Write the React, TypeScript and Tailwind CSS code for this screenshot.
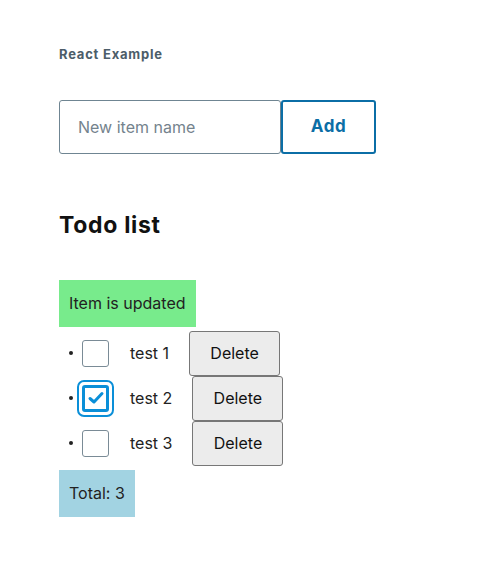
import { useState } from "react"

type Item = {
  id: number
  name: string
  done: boolean
}

const initialItems: Item[] = [
  { id: 1, name: "test 1", done: false },
  { id: 2, name: "test 2", done: true },
  { id: 3, name: "test 3", done: false },
]

const font = { fontFamily: "Inter, 'Noto Sans', sans-serif" }

const CheckBox = ({ checked, onChange }: { checked: boolean; onChange: () => void }) => {
  if (checked) {
    return (
      <button
        onClick={onChange}
        className="flex h-[37px] w-[37px] items-center justify-center rounded-[7px] border-2 border-[#0a8fd8]"
      >
        <span className="flex h-[27px] w-[27px] items-center justify-center rounded-[3px] border-[3px] border-[#0a8fd8] bg-white">
          <svg width="18" height="18" viewBox="0 0 18 18">
            <path
              d="M3 9.5 L7 13 L15 4.5"
              fill="none"
              stroke="#0a8fd8"
              strokeWidth="3"
              strokeLinecap="round"
              strokeLinejoin="round"
            />
          </svg>
        </span>
      </button>
    )
  }
  return (
    <span className="flex h-[37px] w-[37px] items-center justify-center">
      <button
        onClick={onChange}
        className="h-[27px] w-[27px] rounded-[3px] border border-[#7a8b96] bg-white"
      />
    </span>
  )
}

export default function App() {
  const [items, setItems] = useState<Item[]>(initialItems)
  const [name, setName] = useState("")

  const toggle = (id: number) =>
    setItems(items.map((i) => (i.id === id ? { ...i, done: !i.done } : i)))

  return (
    <div className="min-h-[569px] bg-white pl-[59px] text-[#1b1b1b]" style={font}>
      <div className="pt-[45px] text-[13px] font-bold tracking-[0.06em] text-[#4c5d69]">
        React Example
      </div>

      <div className="mt-[35px] flex">
        <input
          value={name}
          onChange={(e) => setName(e.target.value)}
          placeholder="New item name"
          className="h-[54px] w-[222px] rounded-[3px] border border-[#6f8592] px-[18px] text-[16px] text-[#333] outline-none placeholder:text-[#74838d]"
        />
        <button className="h-[54px] w-[95px] rounded-[3px] border-2 border-[#0b6ea6] text-[17px] font-bold tracking-[0.03em] text-[#0b6ea6]">
          Add
        </button>
      </div>

      <h2 className="mt-[55px] text-[23px] font-bold leading-[32px] tracking-[0.03em] text-[#111]">
        Todo list
      </h2>

      <div className="mt-[39px] inline-flex h-[47px] items-center bg-[#78eb8c] px-[10px] text-[16px] text-[#222]">
        Item is updated
      </div>

      <ul className="mt-[4px] list-none">
        {items.map((item) => (
          <li key={item.id} className="flex h-[45px] items-center">
            <span className="ml-[10px] h-[4px] w-[4px] rounded-full bg-[#222]" />
            <span className="ml-[4px]">
              <CheckBox checked={item.done} onChange={() => toggle(item.id)} />
            </span>
            <span className="ml-[16px] text-[16px] text-[#222]">{item.name}</span>
            <button className="ml-[20px] h-[45px] w-[91px] rounded-[3px] border border-[#777] bg-[#ececec] text-[16px] text-[#111]">
              Delete
            </button>
          </li>
        ))}
      </ul>

      <div className="mt-[4px] inline-flex h-[47px] items-center bg-[#a2d3e2] px-[10px] text-[16px] text-[#222]">
        Total: {items.length}
      </div>
    </div>
  )
}
